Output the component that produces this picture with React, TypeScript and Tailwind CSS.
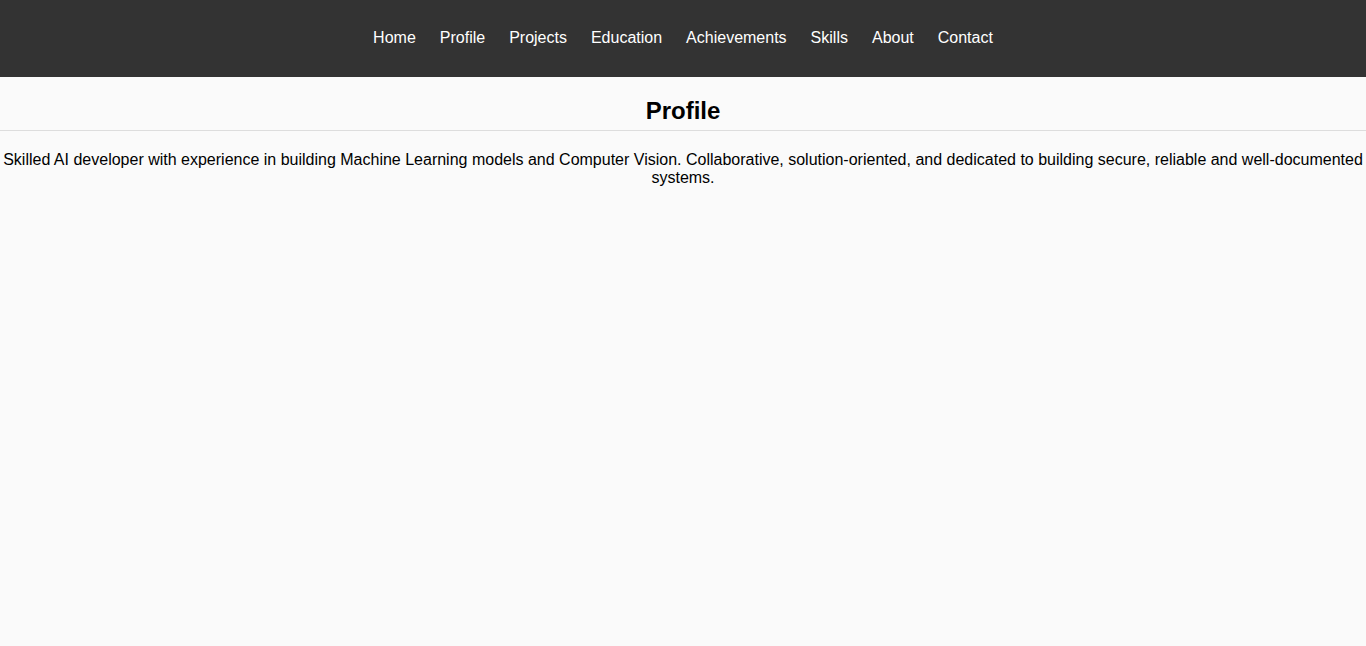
import React from 'react';

const links = ['Home', 'Profile', 'Projects', 'Education', 'Achievements', 'Skills', 'About', 'Contact'];

const App: React.FC = () => {
  return (
    <div className="min-h-screen bg-[#fafafa] text-black font-['Liberation_Sans',Arial,sans-serif]">
      <nav className="h-[77px] pb-[2px] bg-[#333333] flex items-center justify-center">
        <ul className="flex">
          {links.map(link => (
            <li key={link}>
              <a href={`#${link.toLowerCase()}`} className="block px-3 text-base text-white">
                {link}
              </a>
            </li>
          ))}
        </ul>
      </nav>

      <section id="profile">
        <h2 className="pt-[18px] pb-[3px] text-2xl font-bold text-center border-b border-[#dddddd]">Profile</h2>
        <p className="mt-[20px] text-base leading-[18px] text-center">
          Skilled AI developer with experience in building Machine Learning models and Computer Vision. Collaborative, solution-oriented, and dedicated to building secure, reliable and well-documented systems.
        </p>
      </section>
    </div>
  );
};

export default App;
